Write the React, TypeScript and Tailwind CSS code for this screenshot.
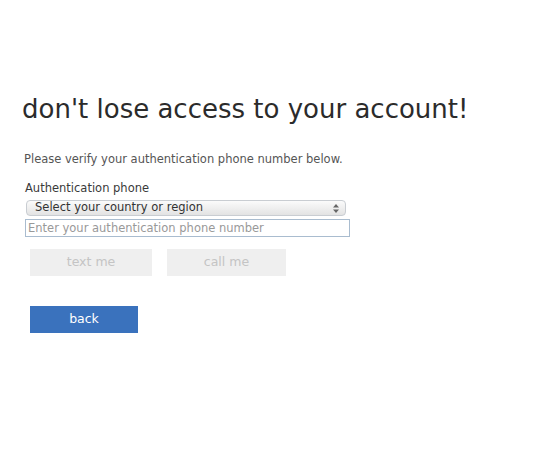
import React from 'react';

const font = { fontFamily: '"DejaVu Sans", Verdana, sans-serif' };

export default function App() {
  return (
    <div className="w-[559px] h-[460px] bg-white text-[#333]" style={font}>
      <div className="pl-[22px] pt-[92px]">
        <h1 className="text-[26px] leading-[34px] text-[#2b2b2b] font-normal">
          don't lose access to your account!
        </h1>
        <p className="mt-[26px] ml-[2px] text-[11.5px] leading-[14px] text-[#555]">
          Please verify your authentication phone number below.
        </p>
        <div className="mt-[15px] ml-[3px] text-[11.5px] leading-[14px] text-[#3a3a3a]">Authentication phone</div>
        <div className="mt-[5px] ml-[4px] w-[320px] h-[16px] rounded-[4px] border border-[#c9cdd2] bg-gradient-to-b from-[#fbfbfb] to-[#e3e3e3] flex items-center justify-between pl-[8px] pr-[6px]">
          <span className="text-[11.5px] leading-none text-[#333]">Select your country or region</span>
          <svg width="6" height="9" viewBox="0 0 6 9">
            <path d="M3 0 L6 3.5 H0 Z" fill="#666" />
            <path d="M3 9 L6 5.5 H0 Z" fill="#666" />
          </svg>
        </div>
        <input
          placeholder="Enter your authentication phone number"
          className="block mt-[3px] ml-[3px] w-[325px] h-[18px] border border-[#a9bccf] px-[2px] text-[11.5px] leading-none placeholder:text-[#999] outline-none"
          style={font}
        />
        <div className="mt-[12px] ml-[8px] flex gap-[15px]">
          <button className="w-[122px] h-[27px] bg-[#efefef] text-[12.5px] text-[#c4c4c4]" style={font}>
            text me
          </button>
          <button className="w-[119px] h-[27px] bg-[#efefef] text-[12.5px] text-[#c4c4c4]" style={font}>
            call me
          </button>
        </div>
        <button className="block mt-[30px] ml-[8px] w-[108px] h-[27px] bg-[#3a72bd] text-[12.5px] text-white" style={font}>
          back
        </button>
      </div>
    </div>
  );
}
